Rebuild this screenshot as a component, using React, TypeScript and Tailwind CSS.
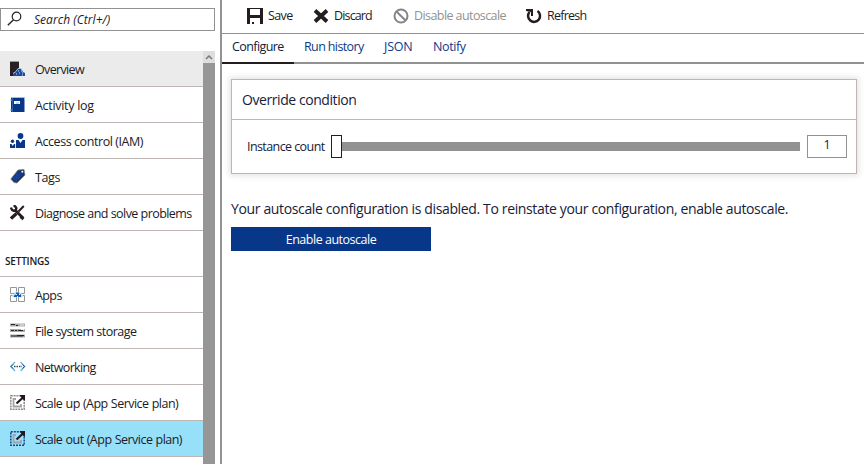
import type { ReactNode } from 'react';

const Overview = () => (
  <svg width="16" height="16" viewBox="0 0 16 16">
    <path d="M0 1h9v7L4 15H0z" fill="#2a2023" />
    <path d="M0 .5h9" stroke="#999" />
    <path d="M3 15v-3l3-1 2-3h3l2 3 2 1v3z" fill="#1a4b9c" />
    <path d="M3 12.500l3-2L8 7.500h3l2 2.500" stroke="#a6c6e4" fill="none" />
    <path d="M8 10h1m2 0h1m-3 2h1m2 0h1m-7 1h1m5 1h1" stroke="#cfe0f4" />
  </svg>
);
const Log = () => (
  <svg width="16" height="16" viewBox="0 0 16 16">
    <path d="M1 .5h13.500v14.500H1z" fill="#08378a" />
    <path d="M1 .5h13.500v2" stroke="#8fc5df" fill="none" />
    <path d="M2.500 1v14" stroke="#2e60aa" />
    <path d="M0 3h2M0 13h2" stroke="#79b6d4" />
    <path d="M4 4h6v3H4z" fill="#fff" />
    <path d="M6 6h3" stroke="#8fb1d4" />
  </svg>
);
const People = () => (
  <svg width="16" height="16" viewBox="0 0 16 16" fill="#08378a">
    <circle cx="10.500" cy="3" r="2.900" />
    <path d="M6 7h2.500l2 3 2-3H15v8H6z" />
    <circle cx="2.500" cy="8.200" r="1.700" />
    <path d="M0 11h1.500l1.200 2L4 11h1.200v4H0z" />
  </svg>
);
const Tag = () => (
  <svg width="16" height="16" viewBox="0 0 16 16">
    <path d="M8 1l6-.5L15 6 7 14l-3-.5L.8 10z" fill="#233153" stroke="#7a858f" strokeWidth=".8" />
    <path d="M8.500 2l4.500 3-7 7.500-4-3z" fill="#0c3b98" />
    <path d="M3 9l4 3M6 5l4 4M4.500 7l4 3" stroke="#445a8c" strokeDasharray="1 1" />
    <circle cx="12.300" cy="2.700" r="1" fill="#fff" />
  </svg>
);
const Tools = () => (
  <svg width="16" height="16" viewBox="0 0 16 16" fill="none" stroke="#241c1f">
    <path d="M4.500 4.500l8.500 8.500" strokeWidth="2.800" />
    <path d="M1 2.500C1.500 6 5 6.500 6 4.500S5 .8 3.500.8" strokeWidth="2.400" />
    <path d="M13.800 1L8.500 6.500" strokeWidth="2" />
    <path d="M6.500 8.500l-5.500 5" strokeWidth="3.200" />
    <path d="M10.500 11.500l3 2.500" strokeWidth="3" />
  </svg>
);
const Apps = () => (
  <svg width="16" height="16" viewBox="0 0 16 16">
    <path d="M.5.5h6v6h-6zM8.500.5h6v6h-6zM.5 8.500h6v6h-6zM8.500 8.500h6v6h-6z" fill="#fff" stroke="#969696" />
    <path d="M4 10.500c-3-.5-2-3 0-3 0-3 3-4.500 5-2 2-.5 3 1 2.500 2 2 0 2 3 0 3z" fill="#bde5f5" />
    <path d="M4 10V8.500l2-1V5.500h3v1l2 1V10z" fill="#145aac" />
    <path d="M6 7.500h1m2 0h1M7 9.500h1" stroke="#dff5ff" />
  </svg>
);
const Storage = () => (
  <svg width="16" height="16" viewBox="0 0 16 16">
    <path d="M0 2h15M0 7.500h15M0 13h15" stroke="#aaa" strokeWidth="3" />
    <path d="M1 1.500h4m1 1h2M1 7.500h3m1 0h2m1 0h5M1 13h12M7 12.500h7" stroke="#252525" strokeWidth="1.200" />
    <path d="M10 2h4M11 6.500h3" stroke="#eee" />
  </svg>
);
const Network = () => (
  <svg width="16" height="16" viewBox="0 0 16 16" fill="none">
    <path d="M5 3L.8 7.500 5 12M10.500 3l4.200 4.500-4.200 4.500" stroke="#67bfe9" strokeWidth="1.500" />
    <path d="M1 7.500l2-2M12.500 5.500l2 2-2 2M1 7.500l2 2" stroke="#164b9b" />
    <path d="M4 7.500h8" stroke="#444" strokeWidth="1.500" strokeDasharray="1.500 1" />
  </svg>
);
const Scale = ({ active = false }: { active?: boolean }) => (
  <svg width="16" height="16" viewBox="0 0 16 16" fill="none">
    <path d="M.8.8h13.400v13.400H.8z" stroke={active ? '#164591' : '#8d8c8a'} strokeWidth="1.500" strokeDasharray={active ? '2 1' : '2 .8'} />
    <path d="M6 4H3.500v7.500h7.500V9" stroke="#a4a4a2" strokeWidth="1.800" />
    <path d="M6.500 8.500L13 2.500" stroke="#1f191b" strokeWidth="2.200" />
    <path d="M10 0h5v5.500h-1L10 1z" fill="#1f191b" />
  </svg>
);

function Item({ icon, label, tracking, bg = '' }: { icon: ReactNode; label: string; tracking: string; bg?: string }) {
  return (
    <div className={`flex h-9 shrink-0 items-center gap-[9px] border-b border-[#beb6b2] pl-[10px] ${bg}`}>
      <span className="mt-px size-4 shrink-0">{icon}</span>
      <span className={`pt-[3px] ${tracking}`}>{label}</span>
    </div>
  );
}

export default function App() {
  return (
    <div className="flex h-[464px] w-[864px] overflow-hidden whitespace-nowrap bg-white font-['Open_Sans','Noto_Sans',sans-serif] text-[12.5px] text-[#211b1e]">
      <aside className="flex h-full w-[220px] shrink-0 flex-col pt-2">
        <div className="flex h-[23px] w-[215px] shrink-0 items-center border border-[#929292] pl-[6px]">
          <svg className="-mt-px" width="16" height="16" viewBox="0 0 16 16" fill="none" stroke="#292326">
            <circle cx="9.500" cy="5.500" r="4.300" strokeWidth="1.200" />
            <path d="M6.500 8.700L.8 14.300" strokeWidth="1.400" />
          </svg>
          <span className="ml-[11px] text-[12px] tracking-[0.04px] italic">Search (Ctrl+/)</span>
        </div>
        <div className="mt-5 flex min-h-0 w-[215px] flex-1">
          <nav className="flex w-[203px] flex-col overflow-hidden">
            <Item icon={<Overview />} label="Overview" tracking="tracking-[-0.65px]" bg="bg-[#ebebeb]" />
            <Item icon={<Log />} label="Activity log" tracking="tracking-[-0.3px]" />
            <Item icon={<People />} label="Access control (IAM)" tracking="tracking-[-0.43px]" />
            <Item icon={<Tag />} label="Tags" tracking="tracking-[-0.4px]" />
            <Item icon={<Tools />} label="Diagnose and solve problems" tracking="tracking-[-0.58px] [word-spacing:0.2px]" />
            <div className="flex h-[46px] shrink-0 items-end border-b border-[#beb6b2] pb-[7px] pl-[5px] text-[10px] font-semibold tracking-[-0.2px]">SETTINGS</div>
            <Item icon={<Apps />} label="Apps" tracking="tracking-[-0.6px]" />
            <Item icon={<Storage />} label="File system storage" tracking="tracking-[-0.52px]" />
            <Item icon={<Network />} label="Networking" tracking="tracking-[-0.68px]" />
            <Item icon={<Scale />} label="Scale up (App Service plan)" tracking="tracking-[-0.52px] [word-spacing:0.4px]" />
            <Item icon={<Scale active />} label="Scale out (App Service plan)" tracking="tracking-[-0.52px] [word-spacing:0.4px]" bg="bg-[#97e0fa]" />
          </nav>
          <div className="w-3 bg-[#969696]">
            <div className="flex h-3 items-center justify-center bg-[#dededc]">
              <svg width="8" height="6" viewBox="0 0 8 6"><path d="M1 5l3-3 3 3" fill="none" stroke="#777" strokeWidth="1.500" /></svg>
            </div>
          </div>
        </div>
      </aside>
      <main className="flex min-w-0 flex-1 flex-col border-l-2 border-[#929292]">
        <div className="flex h-[34px] shrink-0 items-center border-b border-[#929292] pl-[25px] pb-0.5">
          <svg width="16" height="16" viewBox="0 0 16 16" fill="#241c1f">
            <path fillRule="evenodd" d="M0 0h16v16H0zM3 1v6h10V1zM3 10v6h2v-2h2v2h6v-6z" />
          </svg>
          <span className="ml-[5px] w-[25px] pt-0.5 tracking-[-0.6px]">Save</span>
          <svg className="ml-5" width="16" height="14" viewBox="0 0 16 14"><path d="M2 1.500l12 11M14 1.500l-12 11" stroke="#241c1f" strokeWidth="3.800" /></svg>
          <span className="ml-[5px] w-[38px] pt-0.5 tracking-[-0.85px]">Discard</span>
          <svg className="ml-[21px]" width="16" height="16" viewBox="0 0 16 16" fill="none" stroke="#858585" strokeWidth="2"><circle cx="8" cy="8" r="6.500" /><path d="M3.500 3.500l9 9" /></svg>
          <span className="ml-[5px] w-[92px] pt-0.5 tracking-[-0.58px] text-[#929292]">Disable autoscale</span>
          <svg className="ml-5" width="16" height="16" viewBox="0 0 16 16"><path d="M11.500 3A6 6 0 1 1 3.500 4" fill="none" stroke="#241c1f" strokeWidth="2.500" /><path d="M0 1h7v7H5V4L0 3z" fill="#241c1f" /></svg>
          <span className="ml-[5px] pt-0.5 tracking-[-0.75px]">Refresh</span>
        </div>
        <div className="flex h-[30px] shrink-0 border-b-2 border-[#929292] leading-[26px] text-[#0a3a8a]">
          <span className="-mb-0.5 w-[72px] border-b-2 border-[#241c1f] pl-[10px] tracking-[-0.58px] text-[#14203a]">Configure</span>
          <span className="ml-[10px] w-[60px] tracking-[-0.62px]">Run history</span>
          <span className="ml-5 w-[29px] tracking-[-0.2px]">JSON</span>
          <span className="ml-5 tracking-[-0.4px]">Notify</span>
        </div>
        <div className="pl-[9px] pt-[15px]">
          <section className="h-[95px] w-[626px] border border-[#beb6b2] shadow-[0_0_6px_2px_#e6e5e3] text-[#15213a]">
            <h2 className="flex h-10 items-center border-b border-[#beb6b2] pl-[10px] text-[14px] tracking-[-0.43px]">Override condition</h2>
            <div className="flex h-[53px] items-center pl-[15px]">
              <span className="w-[84px] pt-0.5 tracking-[-0.58px]">Instance count</span>
              <span className="h-[23px] w-[11px] border border-[#241c1f] bg-white" />
              <span className="h-[9px] w-[458px] bg-[#929292]" />
              <span className="ml-[7px] flex h-[23px] w-10 items-center justify-center border border-[#929292] pb-0.5">1</span>
            </div>
          </section>
          <p className="mt-[25px] h-5 text-[14px] leading-5 tracking-[-0.36px] text-[#15213a]">Your autoscale configuration is disabled. To reinstate your configuration, enable autoscale.</p>
          <button className="mt-2 flex h-6 w-[200px] items-center justify-center bg-[#08378a] pt-0.5 tracking-[-0.48px] text-white">Enable autoscale</button>
        </div>
      </main>
    </div>
  );
}
